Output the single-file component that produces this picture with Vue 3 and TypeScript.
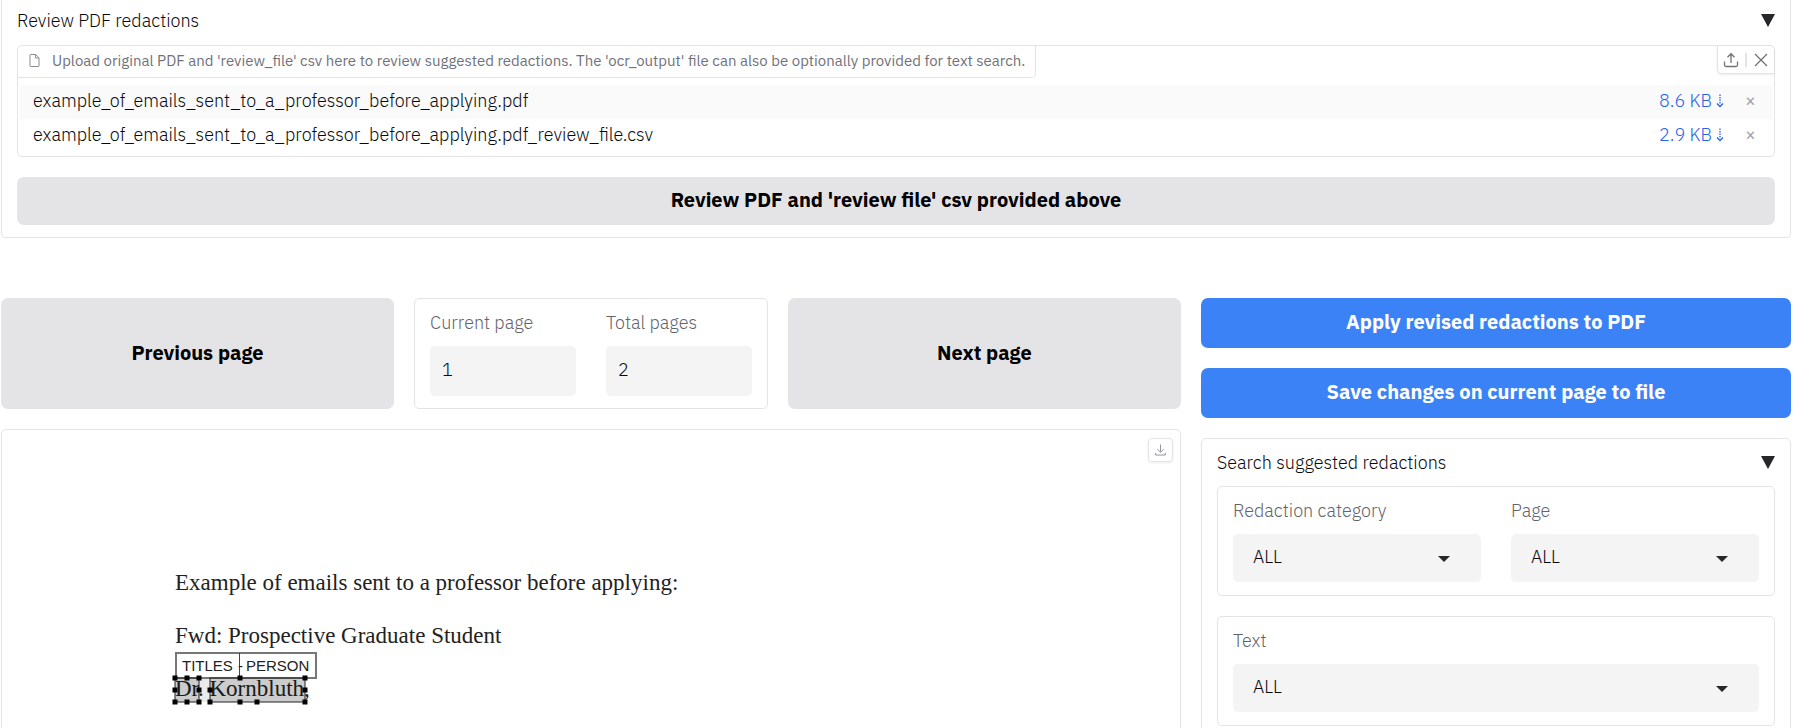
<script setup lang="ts">
import { ref } from 'vue'

interface UploadedFile {
  name: string
  size: string
}

interface Point {
  x: number
  y: number
}

const files = ref<UploadedFile[]>([
  { name: 'example_of_emails_sent_to_a_professor_before_applying.pdf', size: '8.6 KB' },
  { name: 'example_of_emails_sent_to_a_professor_before_applying.pdf_review_file.csv', size: '2.9 KB' },
])

const currentPage = ref('1')
const totalPages = ref('2')
const category = ref('ALL')
const pageFilter = ref('ALL')
const textFilter = ref('ALL')
const reviewOpen = ref(true)
const searchOpen = ref(true)

const handles: Point[] = [
  ...[4, 16, 28, 69, 134].map((x) => ({ x, y: 29 })),
  ...[4, 28, 39, 134].map((x) => ({ x, y: 41 })),
  ...[4, 16, 28, 39, 69, 86, 134].map((x) => ({ x, y: 53 })),
]

function removeFile(index: number): void {
  files.value.splice(index, 1)
}
</script>

<template>
  <main class="app">
    <section class="panel review">
      <button class="accordion" type="button" :aria-expanded="reviewOpen" @click="reviewOpen = !reviewOpen">
        <span>Review PDF redactions</span>
        <svg class="marker" viewBox="0 0 14 13" aria-hidden="true"><path d="M0 0h14L7 13z" /></svg>
      </button>
      <div v-if="reviewOpen" class="stack">
        <div class="upload">
          <div class="upload-head">
            <div class="upload-label">
              <svg class="doc-icon" viewBox="0 0 10 13" aria-hidden="true">
                <path d="M1.5.5h4.7l3.3 3.3v8.2a.5.5 0 0 1-.5.5H1a.5.5 0 0 1-.5-.5V1a.5.5 0 0 1 .5-.5zM6 .7V4h3.4" />
              </svg>
              <span>Upload original PDF and 'review_file' csv here to review suggested redactions. The 'ocr_output' file can also be optionally provided for text search.</span>
            </div>
            <div class="upload-tools">
              <button type="button" aria-label="Upload">
                <svg class="tool-icon" viewBox="0 0 16 16" aria-hidden="true">
                  <path d="M8 11V2M4.500 5.200L8 1.700l3.500 3.500M1.500 9.500v3.500a1.500 1.500 0 0 0 1.500 1.500h10a1.500 1.500 0 0 0 1.500-1.500V9.500" />
                </svg>
              </button>
              <span class="divider"></span>
              <button type="button" aria-label="Clear">
                <svg class="tool-icon" viewBox="0 0 16 16" aria-hidden="true"><path d="M2 2l12 12M14 2L2 14" /></svg>
              </button>
            </div>
          </div>
          <table class="files">
            <tbody>
              <tr v-for="(file, index) in files" :key="file.name">
                <td class="file-name">{{ file.name }}</td>
                <td class="file-size">
                  <a href="#">{{ file.size }}<svg class="down" viewBox="0 0 8 14" aria-hidden="true"><path class="dots" d="M4 .5v10" /><path d="M1 9.500l3 3 3-3" /></svg></a>
                </td>
                <td class="file-remove">
                  <button type="button" aria-label="Remove this file" @click="removeFile(index)">×</button>
                </td>
              </tr>
            </tbody>
          </table>
        </div>
        <button class="btn secondary" type="button">Review PDF and 'review file' csv provided above</button>
      </div>
    </section>

    <div class="columns">
      <div class="main-col">
        <div class="pager">
          <button class="btn secondary" type="button">Previous page</button>
          <div class="panel page-numbers">
            <label class="field">
              <span>Current page</span>
              <input v-model="currentPage" type="text" inputmode="numeric" />
            </label>
            <label class="field">
              <span>Total pages</span>
              <input v-model="totalPages" type="text" inputmode="numeric" />
            </label>
          </div>
          <button class="btn secondary" type="button">Next page</button>
        </div>

        <div class="panel viewer">
          <button class="download" type="button" aria-label="Download">
            <svg viewBox="0 0 12 13" aria-hidden="true"><path d="M6 .5v8M2.500 5.500L6 9l3.500-3.500M.8 9.500v2.500h10.400V9.500" /></svg>
          </button>
          <article class="document">
            <p>Example of emails sent to a professor before applying:</p>
            <p>Fwd: Prospective Graduate Student</p>
            <p class="annotated">
              Dr. Kornbluth,
              <svg class="marks" viewBox="0 0 150 58" aria-hidden="true">
                <rect class="shade" x="4" y="29" width="24" height="24" />
                <rect class="shade" x="39" y="29" width="95" height="24" />
                <rect class="gap" x="28" y="29" width="11" height="24" />
                <rect class="tag" x="5" y="4" width="140" height="25" />
                <path class="tag-line" d="M68.500 4v25" />
                <text x="11" y="22">TITLES</text>
                <text x="67" y="22">-</text>
                <text x="75" y="22">PERSON</text>
                <rect class="outline" x="4" y="29" width="24" height="24" />
                <rect class="outline" x="39" y="29" width="95" height="24" />
                <rect v-for="(h, i) in handles" :key="i" :x="h.x - 2.5" :y="h.y - 2.5" width="5" height="5" />
              </svg>
            </p>
          </article>
        </div>
      </div>

      <aside class="side-col">
        <button class="btn primary" type="button">Apply revised redactions to PDF</button>
        <button class="btn primary" type="button">Save changes on current page to file</button>
        <section class="panel search">
          <button class="accordion" type="button" :aria-expanded="searchOpen" @click="searchOpen = !searchOpen">
            <span>Search suggested redactions</span>
            <svg class="marker" viewBox="0 0 14 13" aria-hidden="true"><path d="M0 0h14L7 13z" /></svg>
          </button>
          <div v-if="searchOpen" class="stack">
            <div class="panel filters">
              <label class="field">
                <span>Redaction category</span>
                <span class="select">
                  <select v-model="category"><option>ALL</option></select>
                  <svg viewBox="0 0 12 6" aria-hidden="true"><path d="M0 0h12L6 6z" /></svg>
                </span>
              </label>
              <label class="field">
                <span>Page</span>
                <span class="select">
                  <select v-model="pageFilter"><option>ALL</option></select>
                  <svg viewBox="0 0 12 6" aria-hidden="true"><path d="M0 0h12L6 6z" /></svg>
                </span>
              </label>
            </div>
            <div class="panel filters">
              <label class="field">
                <span>Text</span>
                <span class="select">
                  <select v-model="textFilter"><option>ALL</option></select>
                  <svg viewBox="0 0 12 6" aria-hidden="true"><path d="M0 0h12L6 6z" /></svg>
                </span>
              </label>
            </div>
          </div>
        </section>
      </aside>
    </div>
  </main>
</template>

<style>
body {
  overflow: hidden;
  background: #fff;
}
</style>

<style scoped>
.app {
  box-sizing: border-box;
  padding: 0 27px 0 1px;
  color: #09090b;
  font: 300 18px/24px 'IBM Plex Sans', Roboto, 'Liberation Sans', sans-serif;
}
.app *,
.app *::before {
  box-sizing: border-box;
}
button,
input,
select {
  margin: 0;
  padding: 0;
  border: 0;
  background: none;
  color: inherit;
  font: inherit;
}
button {
  cursor: pointer;
}
.panel {
  border: 1px solid #e4e4e7;
  border-radius: 5px;
}
.accordion {
  display: flex;
  align-items: center;
  justify-content: space-between;
  width: 100%;
  height: 24px;
  padding-bottom: 1px;
  text-align: left;
}
.marker {
  width: 14px;
  height: 13px;
  fill: #27272a;
}
.stack {
  display: flex;
  flex-direction: column;
  gap: 20px;
}
.review {
  padding: 9px 15px 12px;
  border-top: 0;
  border-radius: 0 0 5px 5px;
}
.review .stack {
  margin-top: 12px;
}
.upload {
  border: 1px solid #e4e4e7;
  border-radius: 5px;
}
.upload-head {
  display: flex;
  justify-content: space-between;
  align-items: flex-start;
  height: 39px;
}
.upload-label {
  display: flex;
  align-items: center;
  gap: 12px;
  height: 32px;
  padding: 0 10px 2px 11px;
  border: 1px solid #e4e4e7;
  border-width: 0 1px 1px 0;
  border-radius: 4px 0 5px;
  color: #71717a;
  font-size: 15px;
  font-weight: 400;
  line-height: 24px;
  white-space: nowrap;
}
.doc-icon {
  width: 11px;
  height: 13px;
  fill: none;
  stroke: #8b8b92;
}
.upload-tools {
  display: flex;
  align-items: center;
  gap: 6px;
  height: 28px;
  padding: 0 5px;
  border: 1px solid #e4e4e7;
  border-width: 0 0 1px 1px;
  border-radius: 0 4px 0 5px;
  box-shadow: 0 1px 3px rgb(0 0 0 / 8%);
}
.upload-tools button {
  display: flex;
}
.tool-icon {
  width: 16px;
  height: 16px;
  fill: none;
  stroke: #71717a;
  stroke-width: 1.3;
}
.divider {
  width: 2px;
  height: 14px;
  background: #e4e4e7;
}
.files {
  width: calc(100% - 4px);
  margin: 0 2px 3px;
  border-collapse: collapse;
}
.files tr {
  height: 34px;
}
.files tr:nth-child(odd) {
  background: #fafafa;
}
.files td {
  padding: 0 0 2px;
}
.files .file-name {
  padding-left: 13px;
}
.file-size {
  text-align: right;
}
.file-size a {
  display: inline-flex;
  align-items: center;
  gap: 4px;
  color: #1d4ed8;
  color: #2563eb;
  text-decoration: none;
}
.down {
  width: 8px;
  height: 14px;
  fill: none;
  stroke: #2563eb;
  stroke-width: 1.3;
}
.dots {
  stroke-dasharray: 1.5 1;
}
.files .file-remove {
  width: 48px;
  padding-left: 5px;
  color: #a1a1aa;
  font-weight: 400;
  text-align: center;
}
.btn {
  padding-bottom: 2px;
  border-radius: 7px;
  font-size: 20px;
  font-weight: 700;
  line-height: 24px;
}
.secondary {
  min-height: 48px;
  background: #e4e4e7;
  color: #000;
}
.primary {
  min-height: 50px;
  background: #3b82f6;
  color: #fff;
}
.columns {
  display: grid;
  grid-template-columns: 2fr 1fr;
  gap: 20px;
  margin-top: 60px;
}
.main-col,
.side-col {
  display: flex;
  flex-direction: column;
  gap: 20px;
  min-width: 0;
}
.pager {
  display: grid;
  grid-template-columns: 10fr 9fr 10fr;
  gap: 20px;
}
.page-numbers,
.filters {
  display: flex;
  gap: 30px;
}
.page-numbers {
  padding: 12px 15px;
}
.field {
  display: flex;
  flex: 1;
  flex-direction: column;
  gap: 11px;
  min-width: 0;
  color: #63636b;
}
.field input {
  width: 100%;
  height: 50px;
  padding: 0 12px 4px;
  border-radius: 5px;
  background: #f4f4f5;
  color: #09090b;
}
.viewer {
  display: flex;
  flex-direction: column;
  min-height: 320px;
  padding: 8px 7px;
}
.download {
  display: flex;
  align-items: center;
  align-self: flex-end;
  justify-content: center;
  width: 25px;
  height: 24px;
  border: 1px solid #e4e4e7;
  border-radius: 4px;
  box-shadow: 0 1px 3px rgb(0 0 0 / 8%);
}
.download svg {
  width: 11px;
  height: 12px;
  fill: none;
  stroke: #8b8b92;
}
.document {
  margin: 107px 0 0 166px;
  color: #222;
  font: 23px/27px 'Liberation Serif', serif;
}
.document p {
  margin: 0 0 26px;
}
.document .annotated {
  position: relative;
}
.marks {
  position: absolute;
  bottom: -5px;
  left: -4px;
  width: 150px;
  height: 58px;
  overflow: visible;
}
.marks text {
  fill: #222;
  font: 15px 'Liberation Sans', sans-serif;
}
.shade {
  fill: rgb(0 0 0 / 20%);
}
.gap {
  fill: rgb(0 0 0 / 8%);
}
.tag {
  fill: #fff;
  stroke: #777;
  stroke-width: 2;
}
.tag-line {
  stroke: #444;
}
.outline {
  fill: none;
  stroke: #222;
}
.search {
  padding: 12px 15px 20px;
}
.search .stack {
  margin-top: 11px;
}
.filters {
  padding: 12px 15px 13px;
}
.select {
  position: relative;
  display: block;
}
.select select {
  display: block;
  width: 100%;
  height: 48px;
  padding: 0 20px 2px;
  border-radius: 5px;
  appearance: none;
  background: #f4f4f5;
  color: #09090b;
}
.select svg {
  position: absolute;
  top: 22px;
  right: 31px;
  width: 12px;
  height: 6px;
  fill: #27272a;
  pointer-events: none;
}
</style>
